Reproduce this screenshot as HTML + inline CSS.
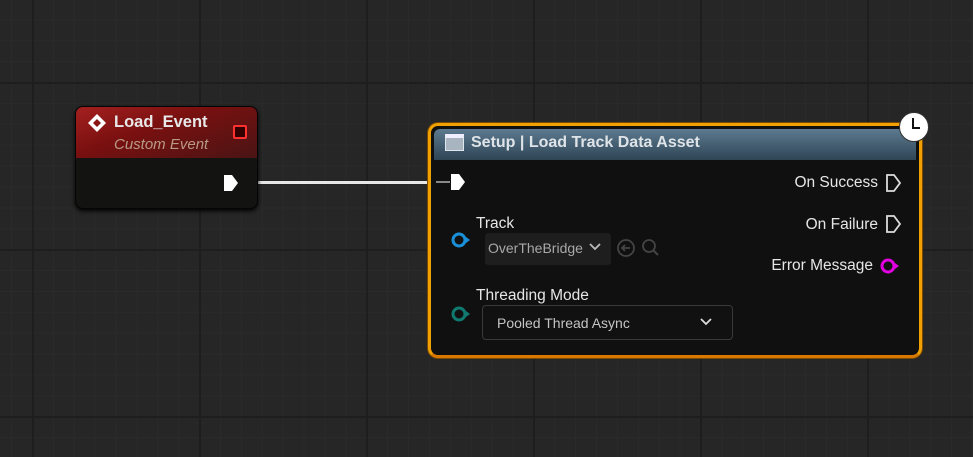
<!DOCTYPE html>
<html><head><style>
body{margin:0;width:973px;height:457px;overflow:hidden;font-family:"Liberation Sans",sans-serif;
background-color:#262626;
background-image:
linear-gradient(to right,#1e1e1e 2px,transparent 2px),
linear-gradient(to bottom,#1e1e1e 2px,transparent 2px),
linear-gradient(to right,#2a2a2a 1px,transparent 1px),
linear-gradient(to bottom,#2a2a2a 1px,transparent 1px);
background-size:167px 167px,167px 167px,20.9px 20.9px,20.9px 20.9px;
background-position:32px 0,0 82px,32px 0,0 82px;position:relative}
.abs{position:absolute}
.t{color:#e6e6e6;font-size:15.5px}
</style></head><body>
<div class="abs" style="left:238px;top:181px;width:200px;height:3px;background:#e8e8e8"></div>
<div class="abs" style="left:75px;top:106px;width:181px;height:101px;border-radius:8px;background:#131312;border:1px solid #050505;overflow:hidden;box-shadow:0 2px 4px #000">
 <div style="height:51px;background:linear-gradient(160deg,#a52020 0%,#7a1010 40%,#4a1414 100%)"></div>
</div>
<svg class="abs" style="left:87px;top:113px" width="20" height="20" viewBox="0 0 20 20"><path d="M10 1 L19 10 L10 19 L1 10Z" fill="#fff"/><path d="M10 6 L14 10 L10 14 L6 10Z" fill="#8a1515"/></svg>
<div class="abs" style="left:114px;top:113px;font-size:16.5px;font-weight:bold;color:#e8e8e8">Load_Event</div>
<div class="abs" style="left:114px;top:136px;font-size:15px;font-style:italic;color:#b89a84">Custom Event</div>
<div class="abs" style="left:233px;top:125px;width:10px;height:10px;border:2px solid #ff3030;border-radius:2px;background:#300"></div>
<svg class="abs" style="left:223px;top:174px" width="16" height="18"><path d="M1 1 H9 L15 9 L9 17 H1Z" fill="#fff"/></svg>
<div class="abs" style="left:428px;top:123px;width:488px;height:229px;border:3px solid #f0a000;border-bottom-color:#d87800;border-radius:10px;background:#0f100f;overflow:hidden;box-shadow:0 0 0 1px #7a4a00">
 <div style="height:31px;background:linear-gradient(to bottom,#5d7a90,#2e4555);margin:3px 3px 0 3px;border-radius:6px 6px 0 0"></div>
</div>
<div class="abs" style="left:445px;top:134px;width:19px;height:17px;background:#a8b4bf;border:1px solid #dfe6ec;box-sizing:border-box;border-top:4px solid #eef"></div>
<div class="abs" style="left:471px;top:134px;font-size:16px;font-weight:bold;color:#dfe4e8">Setup | Load Track Data Asset</div>
<div class="abs" style="left:899px;top:112px;width:30px;height:30px;border-radius:50%;background:#fff;border:1px solid #333;box-sizing:border-box"></div>
<svg class="abs" style="left:899px;top:112px" width="30" height="30"><path d="M14 6 V16 H21" stroke="#111" stroke-width="2" fill="none"/></svg>
<div class="abs" style="left:436px;top:181px;width:14px;height:2px;background:#888"></div>
<svg class="abs" style="left:450px;top:173px" width="16" height="18"><path d="M1 1 H9 L15 9 L9 17 H1Z" fill="#fff"/></svg>
<div class="abs t" style="right:95px;top:174px">On Success</div>
<svg class="abs" style="left:885px;top:173px" width="18" height="20"><path d="M2 2 H9 L15 10 L9 18 H2Z" stroke="#ddd" stroke-width="1.8" fill="none"/></svg>
<div class="abs t" style="right:95px;top:216px">On Failure</div>
<svg class="abs" style="left:885px;top:214px" width="18" height="20"><path d="M2 2 H9 L15 10 L9 18 H2Z" stroke="#ddd" stroke-width="1.8" fill="none"/></svg>
<div class="abs t" style="right:100px;top:257px">Error Message</div>
<svg class="abs" style="left:879px;top:257px" width="22" height="18"><circle cx="9" cy="9" r="6" stroke="#e000e0" stroke-width="3" fill="#111"/><path d="M16 6 L20 9 L16 12Z" fill="#e000e0"/></svg>
<div class="abs t" style="left:476px;top:215px">Track</div>
<svg class="abs" style="left:450px;top:231px" width="22" height="18"><circle cx="9" cy="9" r="6" stroke="#1a90d8" stroke-width="3" fill="#111"/><path d="M16 6 L20 9 L16 12Z" fill="#1a90d8"/></svg>
<div class="abs" style="left:485px;top:233px;width:126px;height:32px;background:#1e1e1e;border-radius:3px"></div>
<div class="abs" style="left:488px;top:240px;font-size:14px;color:#a8a8a8">OverTheBridge</div>
<svg class="abs" style="left:588px;top:241px" width="14" height="12"><path d="M2 3 L7 8 L12 3" stroke="#bbb" stroke-width="1.8" fill="none"/></svg>
<svg class="abs" style="left:616px;top:237px" width="48" height="22"><circle cx="10" cy="11" r="8" stroke="#444" stroke-width="1.8" fill="none"/><path d="M14 11 H6 M9 8 L6 11 L9 14" stroke="#444" stroke-width="1.8" fill="none"/><circle cx="33" cy="9" r="6" stroke="#444" stroke-width="1.8" fill="none"/><path d="M37 13 L42 18" stroke="#444" stroke-width="2"/></svg>
<div class="abs t" style="left:476px;top:287px">Threading Mode</div>
<svg class="abs" style="left:450px;top:305px" width="22" height="18"><circle cx="9" cy="9" r="6" stroke="#107a70" stroke-width="3" fill="#111"/><path d="M16 6 L20 9 L16 12Z" fill="#107a70"/></svg>
<div class="abs" style="left:482px;top:305px;width:251px;height:35px;border:1px solid #3a3a3a;border-radius:4px;background:#111;box-sizing:border-box"></div>
<div class="abs" style="left:497px;top:315px;font-size:14px;color:#c4c4c4">Pooled Thread Async</div>
<svg class="abs" style="left:699px;top:316px" width="14" height="12"><path d="M2 3 L7 8 L12 3" stroke="#ddd" stroke-width="1.8" fill="none"/></svg>
</body></html>
